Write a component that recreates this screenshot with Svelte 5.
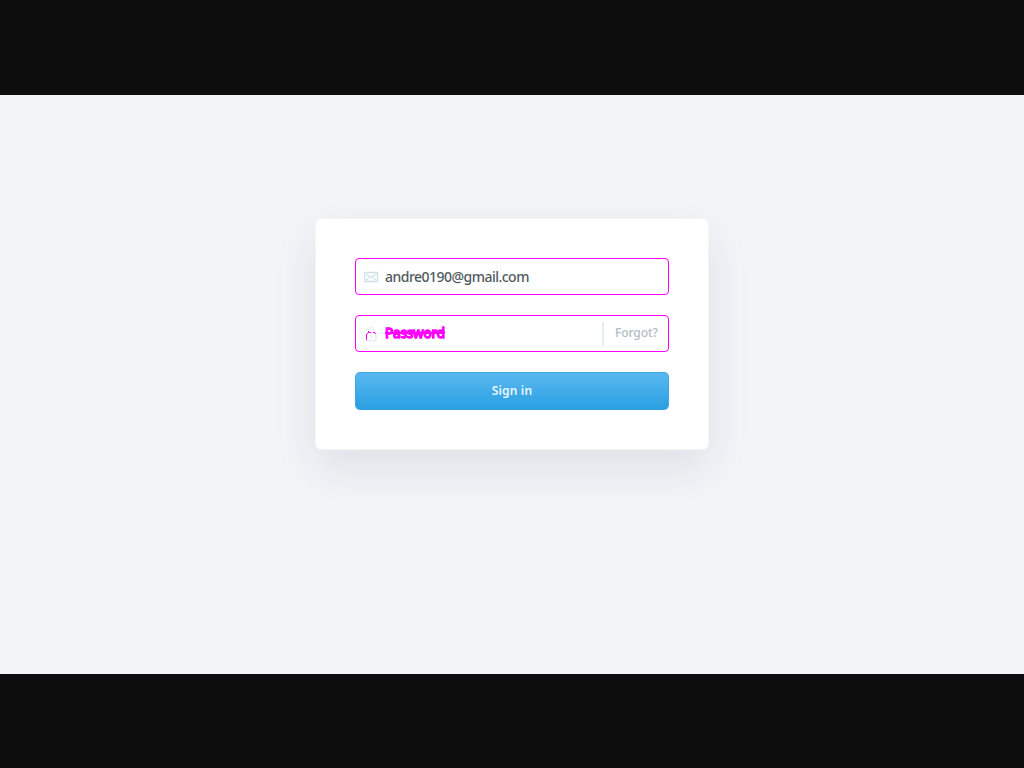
<script>
  let email = $state('andre0190@gmail.com');
</script>

<div class="page">
  <main>
    <form class="card" onsubmit={(e) => e.preventDefault()}>
      <label class="field">
        <svg class="icon" width="16" height="16" viewBox="0 0 16 16" fill="none" stroke="#cfdfe9" stroke-width="1.4">
          <rect x="1.7" y="3.500" width="12.800" height="9" rx="0.7" />
          <path d="M3.5 5.2 8 8.800l4.500-3.600M3.500 11l2.200-2M12.500 11l-2.200-2" stroke-width="1.100" />
        </svg>
        <input class="email" type="text" aria-label="Email" bind:value={email} />
      </label>
      <div class="field">
        <svg class="icon" width="16" height="16" viewBox="0 0 16 16" fill="none">
          <path d="M5 7V4.500a3 3 0 0 1 6 0V7" stroke="#edf2f6" stroke-width="1.5" />
          <rect x="3.500" y="7" width="9.500" height="7.500" rx="1" stroke="#e4edf3" stroke-width="1.5" />
          <path d="M8.300 9.500v2.500" stroke="#dce7ee" stroke-width="1.500" />
          <path d="M3 8h1v6H3zM4 7h1v1H4zM5 6h3v1H5zM5 5h1v1H5zM10 6h2v1h-2zM12 7h1v1h-1z" fill="#ff00ff" shape-rendering="crispEdges" />
        </svg>
        <span class="password">Password</span>
        <a class="forgot" href="#forgot">Forgot?</a>
      </div>
      <button type="submit">Sign in</button>
    </form>
  </main>
</div>

<style>
  :global(body) {
    margin: 0;
    background: #0d0d0d;
  }
  .page {
    box-sizing: border-box;
    height: 768px;
    padding: 95px 0 94px;
    background: #0d0d0d;
    font-family: "Noto Sans", "Open Sans", sans-serif;
  }
  main {
    box-sizing: border-box;
    height: 579px;
    padding-top: 123px;
    background: #f2f4f8;
    overflow: hidden;
  }
  .card {
    box-sizing: border-box;
    width: 394px;
    height: 232px;
    margin: 0 auto;
    padding: 39px;
    border: 1px solid #f4f5f8;
    border-radius: 6px;
    background: #fff;
    box-shadow: 0 18px 44px rgba(40, 45, 50, 0.095);
    display: flex;
    flex-direction: column;
    gap: 20px;
  }
  .field {
    box-sizing: border-box;
    height: 37px;
    flex: none;
    border: 1px solid #ff00ff;
    border-radius: 4px;
    display: flex;
    align-items: center;
    padding-left: 7px;
  }
  .icon {
    flex: none;
    margin-right: 6px;
  }
  .email {
    flex: 1;
    min-width: 0;
    padding: 0;
    border: 0;
    outline: 0;
    background: none;
    color: #505a5f;
    font: 500 14px/20px "Noto Sans", "Open Sans", sans-serif;
    letter-spacing: -0.52px;
  }
  .password {
    flex: 1;
    color: #ff00ff;
    font-size: 13.5px;
    line-height: 18px;
    letter-spacing: -0.15px;
    padding-bottom: 1px;
    -webkit-text-stroke: 1.4px #ff00ff;
    text-decoration: line-through 2px #ff00ff;
  }
  .forgot {
    box-sizing: border-box;
    width: 66px;
    height: 24px;
    padding-left: 11px;
    border-left: 2px solid #e6edf3;
    color: #afbcc5;
    font-size: 12px;
    font-weight: 500;
    line-height: 22px;
    letter-spacing: -0.1px;
    text-decoration: none;
  }
  button {
    height: 38px;
    flex: none;
    padding: 0;
    border: 1px solid #3fa7e3;
    border-bottom-color: #2f9fe0;
    border-radius: 5px;
    background: linear-gradient(#59b8f0, #2a9fe2);
    color: #eaf6fd;
    font: 600 12px/34px "Noto Sans", "Open Sans", sans-serif;
    letter-spacing: 0.18px;
  }
</style>
